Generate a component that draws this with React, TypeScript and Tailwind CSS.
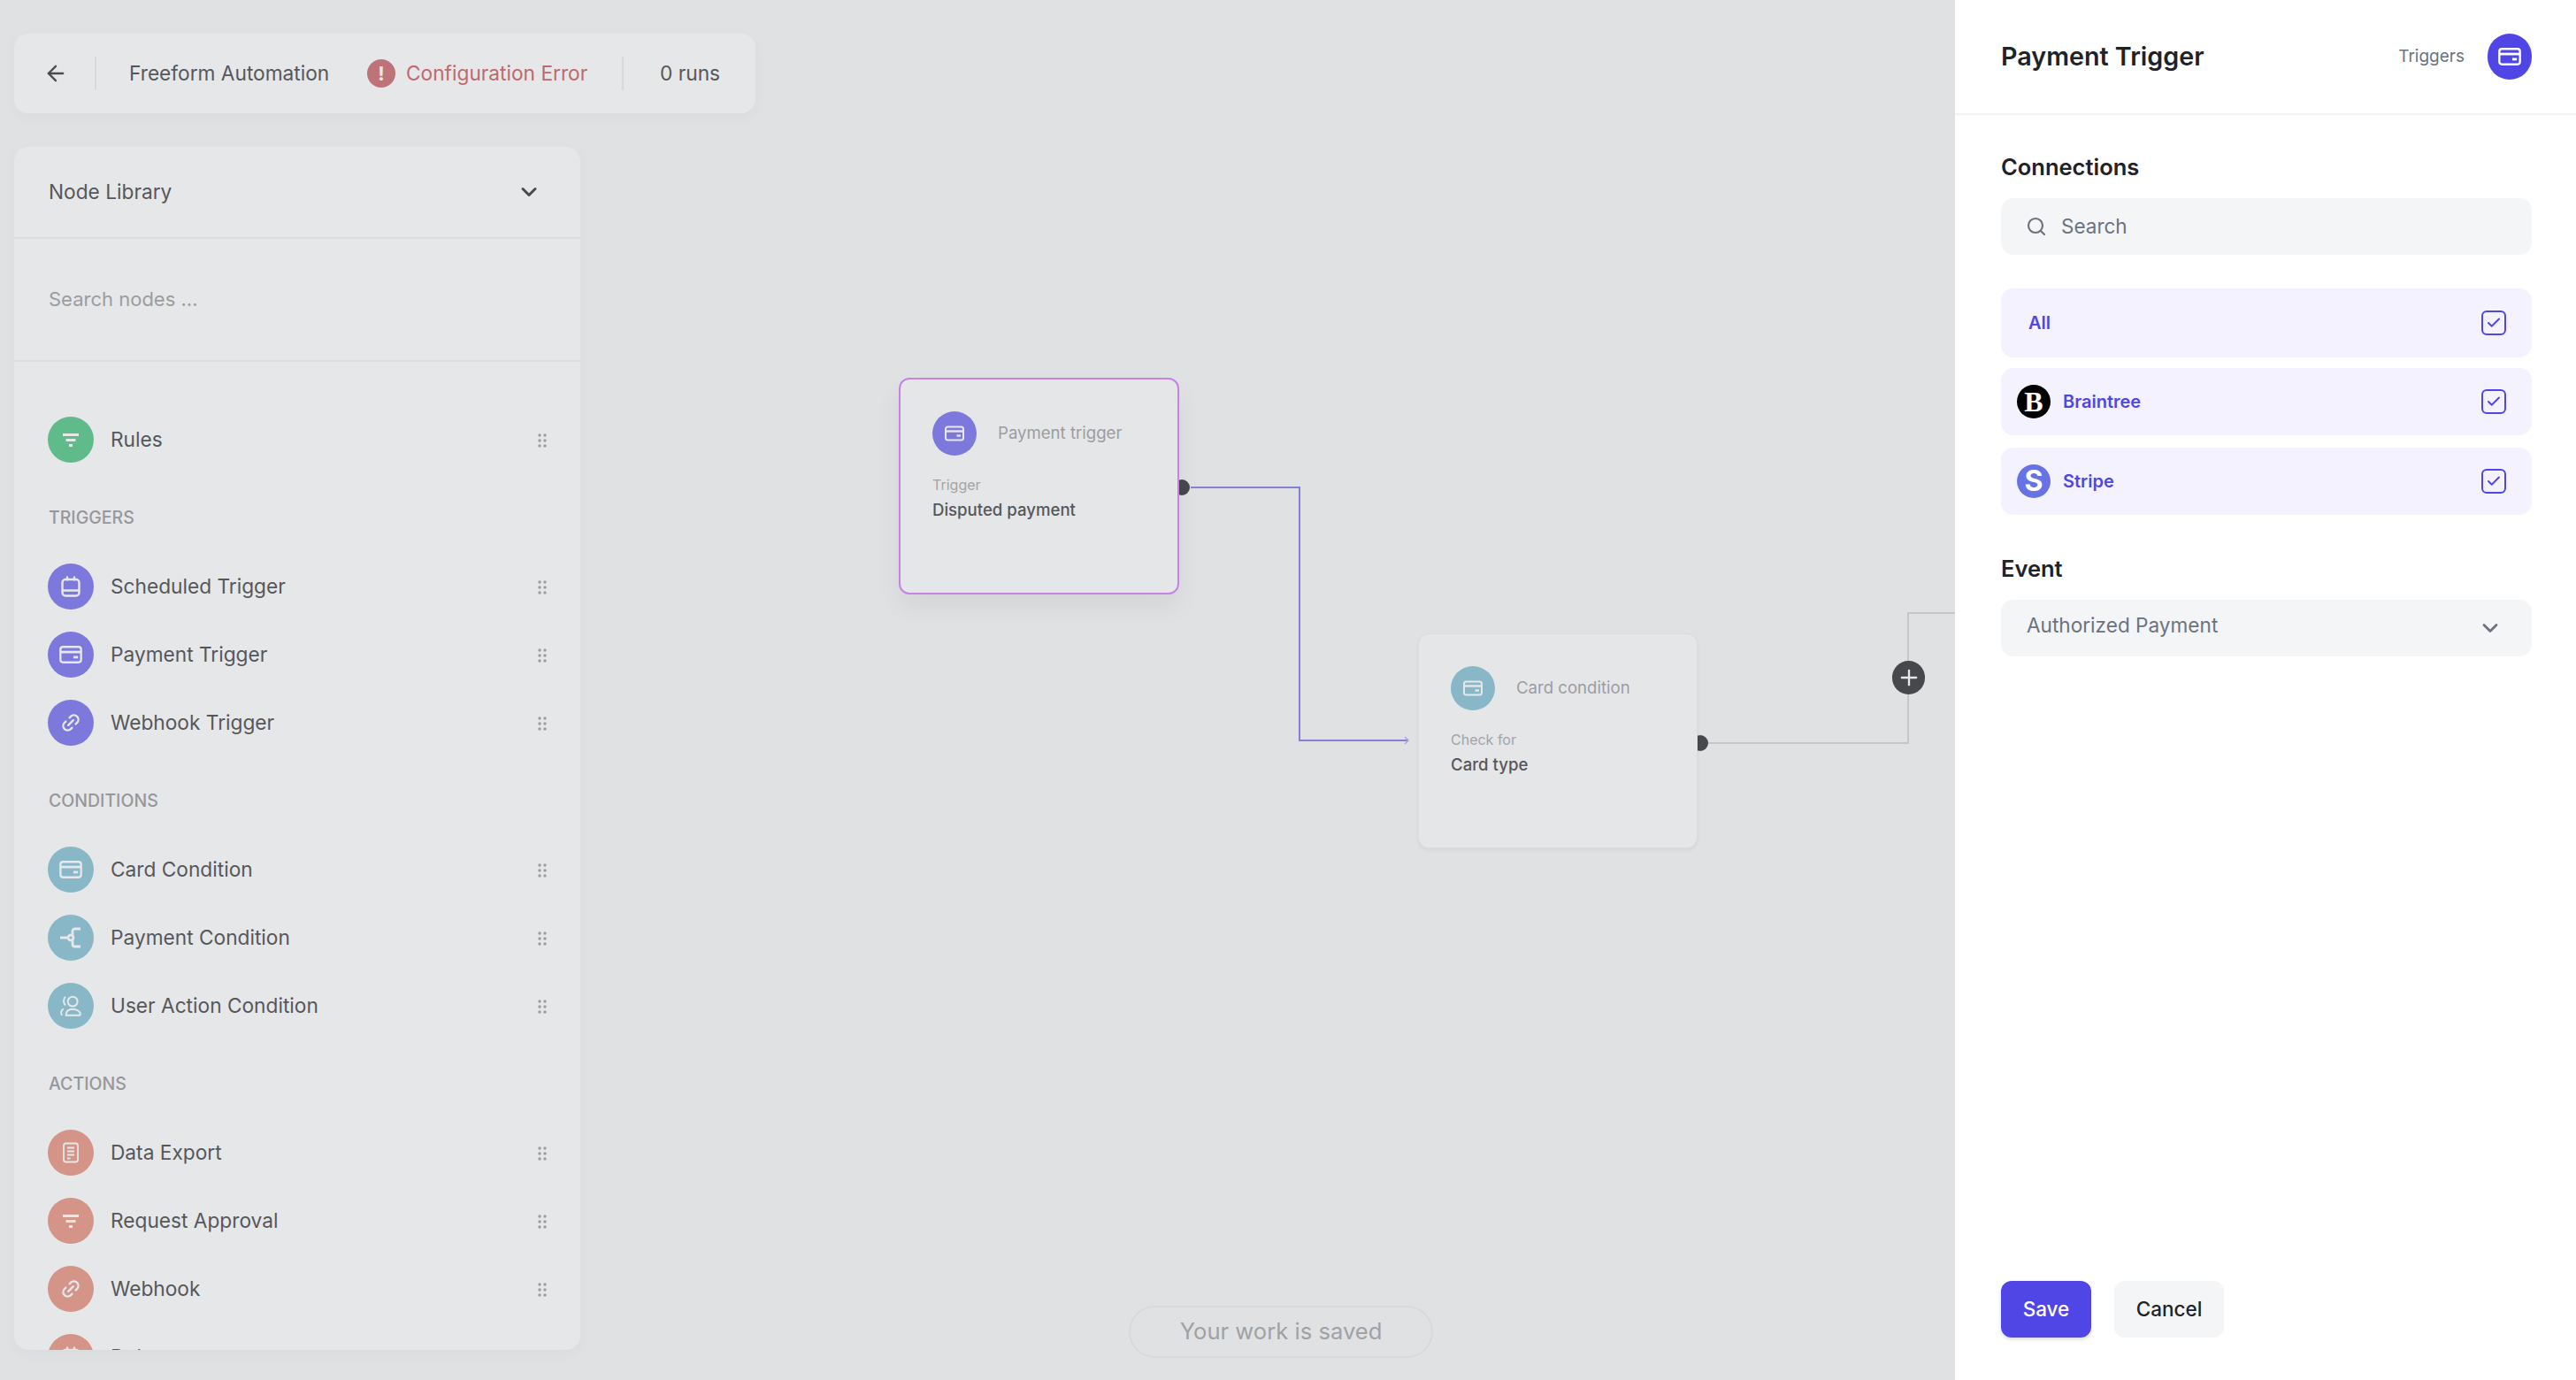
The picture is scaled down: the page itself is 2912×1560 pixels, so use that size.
import React from "react";
import { ArrowLeft, ChevronDown, Link2, Search, Check, Plus } from "lucide-react";

// small hand drawn icons, all on a 24 box
function CardIcon({ className }: { className?: string }) {
  return (
    <svg viewBox="0 0 24 24" fill="none" stroke="currentColor" strokeWidth="2" className={className}>
      <rect x="2" y="4.5" width="20" height="15" rx="2.5" />
      <path d="M2 9.5h20" strokeWidth="2.4" />
      <path d="M14.5 14.5h4.5" strokeWidth="2.4" />
    </svg>
  );
}

function FilterIcon({ className }: { className?: string }) {
  return (
    <svg viewBox="0 0 24 24" fill="none" stroke="currentColor" strokeWidth="3" className={className}>
      <path d="M3 6.5h18M6.5 12.500h11M10 18.500h4" />
    </svg>
  );
}

function CalendarIcon({ className }: { className?: string }) {
  return (
    <svg viewBox="0 0 24 24" fill="none" stroke="currentColor" strokeWidth="2.400" className={className}>
      <rect x="2.500" y="4" width="19" height="18.500" rx="3.500" />
      <path d="M8 .5v5M16 .5v5M2.500 16.500h19" />
    </svg>
  );
}

function BranchIcon({ className }: { className?: string }) {
  return (
    <svg viewBox="0 0 24 24" fill="none" stroke="currentColor" strokeWidth="2.8" className={className}>
      <circle cx="12" cy="12" r="3" />
      <path d="M0 12h9M23 2h-6.500a2.500 2.500 0 0 0-2.500 2.500V9.500M23 22h-6.500a2.500 2.500 0 0 1-2.500-2.500V14.500" />
    </svg>
  );
}

function UsersIcon({ className }: { className?: string }) {
  return (
    <svg viewBox="0 0 24 24" fill="none" stroke="currentColor" strokeWidth="1.8" className={className}>
      <circle cx="14" cy="7.500" r="5" />
      <path d="M7 22c0-4 2.500-6.500 7-6.500s8 2.500 8 5c0 1-.6 1.500-1.500 1.500Z" />
      <path d="M6.500 2.500C4 4.500 4 9 6.500 11.500M4.500 15C2 16.500 1 20 3 22" />
    </svg>
  );
}

function DocIcon({ className }: { className?: string }) {
  return (
    <svg viewBox="0 0 24 24" fill="none" stroke="currentColor" strokeWidth="1.8" className={className}>
      <rect x="4" y="1.500" width="16" height="21" rx="2.500" />
      <path d="M8 6.500h8M8 10.500h8M8 14.500h8M8 18.500h3.500" strokeWidth="2" />
    </svg>
  );
}

function LinkIcon({ className }: { className?: string }) {
  return <Link2 className={className} strokeWidth={2.4} />;
}

function Grip() {
  return (
    <svg viewBox="0 0 10 16" className="w-[10px] h-4 mt-[2px] text-[#9b9c9f]" fill="currentColor">
      <circle cx="2" cy="2" r="1.700" />
      <circle cx="8" cy="2" r="1.700" />
      <circle cx="2" cy="8" r="1.700" />
      <circle cx="8" cy="8" r="1.700" />
      <circle cx="2" cy="14" r="1.700" />
      <circle cx="8" cy="14" r="1.700" />
    </svg>
  );
}

type TRow = {
  label: string;
  color: string;
  icon: React.ReactNode;
};

const green = "bg-[#5fbb89]";
const purple = "bg-[#7d78dc]";
const blue = "bg-[#88b8c8]";
const red = "bg-[#d49488]";

function Row({ label, color, icon }: TRow) {
  return (
    <div className="flex items-center h-[77px] shrink-0 pr-[38px]">
      <div className={`w-[52px] h-[52px] rounded-full flex items-center justify-center text-[#e6e7e9] ${color}`}>
        {icon}
      </div>
      <span className="ml-[19px] flex-1 text-[22.7px] leading-[32px] text-[#56575a]">{label}</span>
      <Grip />
    </div>
  );
}

function SectionLabel({ children }: { children: React.ReactNode }) {
  return (
    <div className="h-[28px] mt-[37px] mb-[24px] pl-[1px] flex items-center text-[19.500px] font-medium uppercase text-[#96979a]">
      {children}
    </div>
  );
}

function NodeLibrary() {
  return (
    <div className="mt-[38px] w-[640px] h-[1360px] bg-[#e6e7e9] rounded-[16px] shadow-[0_4px_16px_rgba(0,0,0,0.03)] flex flex-col overflow-hidden">
      <div className="h-[104px] shrink-0 flex items-center justify-between pl-[39px] pr-[44px] border-b-2 border-[#dcdddf]">
        <span className="text-[22.7px] text-[#56575a]">Node Library</span>
        <ChevronDown className="w-7 h-7 text-[#4a4b4e]" strokeWidth={2.6} />
      </div>
      <div className="h-[139px] shrink-0 flex items-center pl-[39px] border-b-2 border-[#dcdddf] text-[22px] text-[#9c9da0]">
        Search nodes ...
      </div>
      <div className="flex-1 overflow-hidden pl-[38px] pt-[49px] flex flex-col">
        <Row label="Rules" color={green} icon={<FilterIcon className="w-6 h-6" />} />
        <SectionLabel>Triggers</SectionLabel>
        <Row label="Scheduled Trigger" color={purple} icon={<CalendarIcon className="w-6 h-6" />} />
        <Row label="Payment Trigger" color={purple} icon={<CardIcon className="w-7 h-7" />} />
        <Row label="Webhook Trigger" color={purple} icon={<LinkIcon className="w-6 h-6 -rotate-45" />} />
        <SectionLabel>Conditions</SectionLabel>
        <Row label="Card Condition" color={blue} icon={<CardIcon className="w-7 h-7" />} />
        <Row label="Payment Condition" color={blue} icon={<BranchIcon className="w-6 h-6" />} />
        <Row label="User Action Condition" color={blue} icon={<UsersIcon className="w-[26px] h-[26px]" />} />
        <SectionLabel>Actions</SectionLabel>
        <Row label="Data Export" color={red} icon={<DocIcon className="w-6 h-6" />} />
        <Row label="Request Approval" color={red} icon={<FilterIcon className="w-6 h-6" />} />
        <Row label="Webhook" color={red} icon={<LinkIcon className="w-6 h-6 -rotate-45" />} />
        <Row label="Delay" color={red} icon={<CalendarIcon className="w-6 h-6" />} />
      </div>
    </div>
  );
}

function TopBar() {
  return (
    <div className="w-[838px] h-[90px] bg-[#e6e7e9] rounded-[16px] shadow-[0_4px_16px_rgba(0,0,0,0.03)] flex items-center whitespace-nowrap">
      <ArrowLeft className="ml-[33px] w-7 h-7 text-[#4a4b4e]" strokeWidth={2} />
      <div className="ml-[30px] w-[2px] h-[38px] bg-[#d8d9db]" />
      <span className="ml-[37px] w-[227px] text-[22.7px] text-[#56575a]">Freeform Automation</span>
      <div className="ml-[42px] w-8 h-8 rounded-full bg-[#bd7378] flex items-center justify-center text-[#e6e7e9] text-[22px] font-bold">
        !
      </div>
      <span className="ml-[12px] w-[205px] text-[22.7px] text-[#bd6a6e]">Configuration Error</span>
      <div className="ml-[39px] w-[2px] h-[38px] bg-[#d8d9db]" />
      <span className="ml-[41px] text-[22.7px] text-[#56575a]">0 runs</span>
    </div>
  );
}

function FlowNode({
  className,
  color,
  title,
  label,
  value,
}: {
  className: string;
  color: string;
  title: string;
  label: string;
  value: string;
}) {
  return (
    <div className={`absolute rounded-[12px] bg-[#e5e6e8] pl-[36px] ${className}`}>
      <div className="flex items-center">
        <div className={`w-[50px] h-[50px] rounded-full flex items-center justify-center text-[#e6e7e9] ${color}`}>
          <CardIcon className="w-6 h-6" />
        </div>
        <span className="ml-[24px] text-[18.6px] text-[#9c9da0]">{title}</span>
      </div>
      <div className="mt-[22px] text-[16px] leading-[22px] text-[#a3a4a7]">{label}</div>
      <div className="mt-[3px] text-[18.6px] leading-[28px] font-medium text-[#56575a]">{value}</div>
    </div>
  );
}

function Canvas() {
  return (
    <div className="relative flex-1 min-w-0 bg-[#e0e1e3] overflow-hidden pt-[38px] pl-[16px]">
      <svg className="absolute inset-0 w-[2210px] h-[1560px]" fill="none">
        <path d="M1346 551H1469V837H1592" stroke="#8680d4" strokeWidth="2" />
        <path d="M1588 833l4 4-4 4" stroke="#a9a6da" strokeWidth="1.500" />
        <path d="M1931 840H2157V693H2210" stroke="#c5c6c8" strokeWidth="2" />
        <circle cx="1336" cy="551" r="9" fill="#47484b" />
        <circle cx="1922" cy="840" r="9" fill="#47484b" />
      </svg>
      <FlowNode
        className="left-[1016px] top-[427px] w-[317px] h-[245px] pt-[36px] border-2 border-[#c583e6] shadow-[0_14px_28px_rgba(0,0,0,0.06)]"
        color={purple}
        title="Payment trigger"
        label="Trigger"
        value="Disputed payment"
      />
      <FlowNode
        className="left-[1603px] top-[716px] w-[316px] h-[243px] pt-[36px] border border-[#dbdcde] shadow-[0_2px_4px_rgba(0,0,0,0.05)]"
        color={blue}
        title="Card condition"
        label="Check for"
        value="Card type"
      />
      <div className="absolute left-[2139px] top-[747px] w-[37px] h-[38px] rounded-full bg-[#47484b] flex items-center justify-center text-[#e6e7e9]">
        <Plus className="w-7 h-7" strokeWidth={2} />
      </div>
      <TopBar />
      <NodeLibrary />
      <div className="absolute left-[1276px] top-[1476px] w-[344px] h-[59px] rounded-full border-2 border-[#d8d9db] flex items-center justify-center text-[25.6px] text-[#a0a1a4]">
        Your work is saved
      </div>
    </div>
  );
}

function ConnectionRow({
  label,
  logo,
  className,
}: {
  label: string;
  logo?: React.ReactNode;
  className?: string;
}) {
  return (
    <div className={`flex items-center bg-[#f3f2fe] rounded-[14px] pr-[29px] ${className}`}>
      {logo}
      <span className="flex-1 text-[20px] font-semibold text-[#4f46e5]">{label}</span>
      <div className="w-[28px] h-[28px] rounded-[6px] border-2 border-[#4f46e5] flex items-center justify-center text-[#4f46e5]">
        <Check className="w-[18px] h-[18px]" strokeWidth={2.6} />
      </div>
    </div>
  );
}

function SidePanel() {
  return (
    <aside className="w-[702px] shrink-0 bg-white flex flex-col">
      <div className="h-[130px] shrink-0 flex items-center justify-between pl-[52px] pr-[50px] border-b-2 border-[#f3f4f6]">
        <h1 className="text-[28.7px] font-semibold text-[#1f2226]">Payment Trigger</h1>
        <div className="flex items-center">
          <span className="text-[19px] text-[#6b7280]">Triggers</span>
          <div className="ml-[26px] w-[50px] h-[52px] rounded-full bg-[#4f46e5] flex items-center justify-center text-white">
            <CardIcon className="w-7 h-7" />
          </div>
        </div>
      </div>
      <div className="flex-1 pl-[52px] pr-[50px] pt-[41px]">
        <h2 className="h-[36px] text-[25.5px] leading-[36px] font-semibold text-[#1f2226]">Connections</h2>
        <div className="mt-[17px] h-[64px] rounded-[14px] bg-[#f4f5f7] flex items-center pl-[28px] text-[#6b7280]">
          <Search className="w-6 h-6" strokeWidth={2.2} />
          <span className="ml-[16px] text-[22.5px]">Search</span>
        </div>
        <ConnectionRow label="All" className="mt-[38px] h-[78px] pl-[31px]" />
        <ConnectionRow
          label="Braintree"
          className="mt-[12px] h-[76px] pl-[18px]"
          logo={
            <div className="mr-[14px] w-[38px] h-[38px] rounded-full bg-black flex items-center justify-center text-white text-[32px] font-bold font-['Liberation_Serif',serif]">
              B
            </div>
          }
        />
        <ConnectionRow
          label="Stripe"
          className="mt-[14px] h-[76px] pl-[18px]"
          logo={
            <div className="mr-[14px] w-[38px] h-[38px] rounded-full bg-[#6772e5] flex items-center justify-center text-white text-[32px] font-bold">
              S
            </div>
          }
        />
        <h2 className="mt-[43px] h-[36px] text-[25.5px] leading-[36px] font-semibold text-[#1f2226]">Event</h2>
        <div className="mt-[17px] h-[64px] rounded-[14px] bg-[#f4f5f7] flex items-center justify-between pl-[29px] pr-[33px]">
          <span className="pb-[6px] text-[22.6px] text-[#6b7280]">Authorized Payment</span>
          <ChevronDown className="w-7 h-7 text-[#6b7280]" strokeWidth={2.4} />
        </div>
      </div>
      <div className="flex gap-[26px] pl-[52px] pb-[48px]">
        <button className="w-[102px] h-[64px] rounded-[12px] bg-[#4f46e5] text-white text-[22.500px] font-medium shadow-[0_2px_4px_rgba(0,0,0,0.15)]">
          Save
        </button>
        <button className="w-[124px] h-[64px] rounded-[12px] bg-[#f4f5f7] text-[#1f2226] text-[22.500px] font-medium">
          Cancel
        </button>
      </div>
    </aside>
  );
}

export default function App() {
  return (
    <div className="w-[2912px] h-[1560px] flex overflow-hidden font-['Inter',sans-serif]">
      <Canvas />
      <SidePanel />
    </div>
  );
}
